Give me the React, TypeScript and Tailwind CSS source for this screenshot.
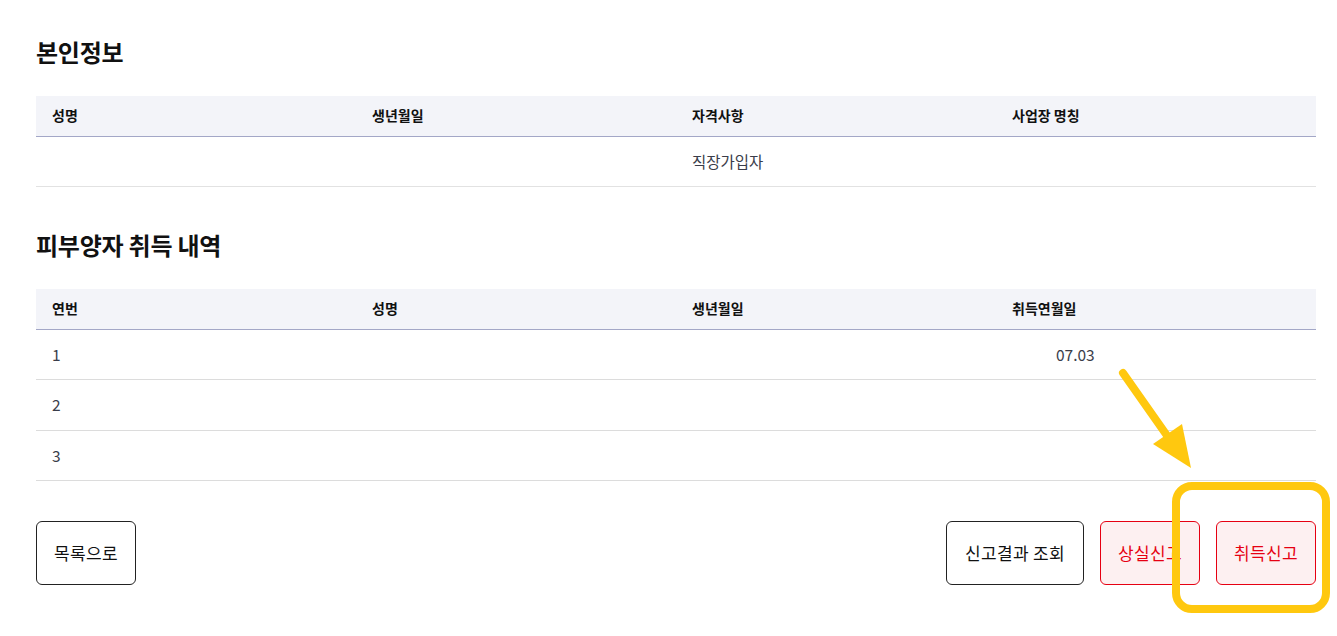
import React from 'react';

const font = { fontFamily: '"Noto Sans CJK KR", "Noto Sans", sans-serif' };

const Th: React.FC<{ children: React.ReactNode }> = ({ children }) => (
  <th className="h-[40px] px-4 text-left text-[14px] font-bold text-[#111] align-middle">{children}</th>
);

const Td: React.FC<{ children?: React.ReactNode; className?: string }> = ({ children, className }) => (
  <td className={`h-[50.5px] px-4 text-[15.5px] text-[#3a3d4a] align-middle ${className ?? ''}`}>{children}</td>
);

const App: React.FC = () => {
  const dependents = [
    { no: 1, date: '07.03' },
    { no: 2, date: '' },
    { no: 3, date: '' },
  ];

  return (
    <div className="relative min-h-[636px] bg-white pl-[36px] pr-[21px] pt-[36px]" style={font}>
      <h2 className="text-[24px] leading-[32px] font-bold tracking-[-0.01em] text-[#111]">본인정보</h2>
      <table className="mt-[28px] w-full table-fixed border-collapse">
        <thead>
          <tr className="bg-[#f3f4f9] border-b border-[#a3a7c7]">
            <Th>성명</Th>
            <Th>생년월일</Th>
            <Th>자격사항</Th>
            <Th>사업장 명칭</Th>
          </tr>
        </thead>
        <tbody>
          <tr className="border-b border-[#e2e2e2]">
            <Td />
            <Td />
            <Td>직장가입자</Td>
            <Td />
          </tr>
        </tbody>
      </table>

      <h2 className="mt-[42px] text-[24px] leading-[32px] font-bold tracking-[-0.01em] text-[#111]">피부양자 취득 내역</h2>
      <table className="mt-[28px] w-full table-fixed border-collapse">
        <thead>
          <tr className="bg-[#f3f4f9] border-b border-[#a3a7c7]">
            <Th>연번</Th>
            <Th>성명</Th>
            <Th>생년월일</Th>
            <Th>취득연월일</Th>
          </tr>
        </thead>
        <tbody>
          {dependents.map((d) => (
            <tr key={d.no} className="border-b border-[#dcdcdc]">
              <Td>{d.no}</Td>
              <Td />
              <Td />
              <Td className="pl-[60px]">{d.date}</Td>
            </tr>
          ))}
        </tbody>
      </table>

      <div className="mt-[40px] flex items-center justify-between">
        <button className="h-[64px] w-[100px] rounded-[6px] border border-[#222] bg-white text-[17px] tracking-[0.02em] text-[#111]">
          목록으로
        </button>
        <div className="flex items-center gap-4">
          <button className="h-[64px] w-[138px] rounded-[6px] border border-[#222] bg-white text-[17px] tracking-[0.02em] text-[#111]">
            신고결과 조회
          </button>
          <button className="h-[64px] w-[100px] rounded-[6px] border border-[#e60012] bg-[#fdf0f1] text-[17px] tracking-[0.02em] text-[#e60012]">
            상실신고
          </button>
          <button className="h-[64px] w-[100px] rounded-[6px] border border-[#e60012] bg-[#fdf0f1] text-[17px] tracking-[0.02em] text-[#e60012]">
            취득신고
          </button>
        </div>
      </div>

      {/* annotation overlay */}
      <div className="pointer-events-none absolute left-[1172px] top-[482px] h-[131px] w-[158px] rounded-[20px] border-[8px] border-[#ffc80f]" />
      <svg className="pointer-events-none absolute left-0 top-0" width="1337" height="636">
        <line x1="1123" y1="373" x2="1168" y2="437" stroke="#ffc80f" strokeWidth="8" strokeLinecap="round" />
        <polygon points="1191,468 1153,444 1182,424" fill="#ffc80f" />
      </svg>
    </div>
  );
};

export default App;
